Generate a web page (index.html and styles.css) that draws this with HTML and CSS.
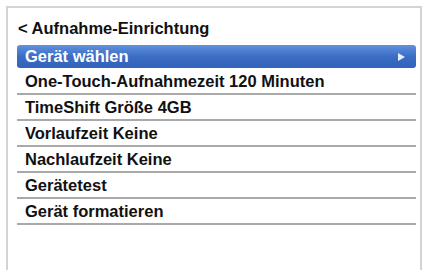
FILE: index.html
```html
<!DOCTYPE html>
<html lang="de">
<head>
<meta charset="utf-8">
<title>Aufnahme-Einrichtung</title>
<link rel="stylesheet" href="styles.css">
</head>
<body>
<div class="frame">
  <div class="title">&lt; Aufnahme-Einrichtung</div>
  <ul class="menu">
    <li class="item selected"><span>Gerät wählen</span><svg class="arrow" width="7" height="8" viewBox="0 0 7 8"><polygon points="0,0 7,4 0,8" fill="#e8eefa"/></svg></li>
    <li class="item">One-Touch-Aufnahmezeit 120 Minuten</li>
    <li class="item">TimeShift Größe 4GB</li>
    <li class="item">Vorlaufzeit Keine</li>
    <li class="item">Nachlaufzeit Keine</li>
    <li class="item">Gerätetest</li>
    <li class="item">Gerät formatieren</li>
  </ul>
</div>
</body>
</html>
```
FILE: styles.css
```css
html, body {
  margin: 0;
  padding: 0;
  background: #ffffff;
}
body {
  width: 429px;
  height: 270px;
  overflow: hidden;
  font-family: "Liberation Sans", Arial, sans-serif;
  font-weight: bold;
  color: #111;
}
.frame {
  margin: 6px 0 0 6px;
  width: 416px;
  height: 264px;
  border: 2px solid #d4d4d4;
  border-bottom: none;
  box-sizing: border-box;
  padding: 8px 8px 0 9px;
}
.title {
  font-size: 16.5px;
  line-height: 19px;
  padding-left: 1px;
  height: 29px;
  box-sizing: border-box;
  padding-top: 3px;
}
.menu {
  list-style: none;
  margin: 0;
  padding: 0;
  width: 399px;
}
.item {
  font-size: 16.5px;
  height: 26px;
  box-sizing: border-box;
  border-bottom: 2px solid #a9a9a9;
  padding-left: 8px;
  line-height: 25px;
}
.item.selected {
  height: 23px;
  line-height: 23px;
  border-bottom: none;
  border-radius: 3px;
  color: #ffffff;
  background: linear-gradient(#6092dc, #3b6dc6 50%, #3262ba);
  display: flex;
  align-items: center;
  justify-content: space-between;
  padding-right: 11px;
  margin-bottom: 1px;
}
.arrow {
  display: block;
}
```
